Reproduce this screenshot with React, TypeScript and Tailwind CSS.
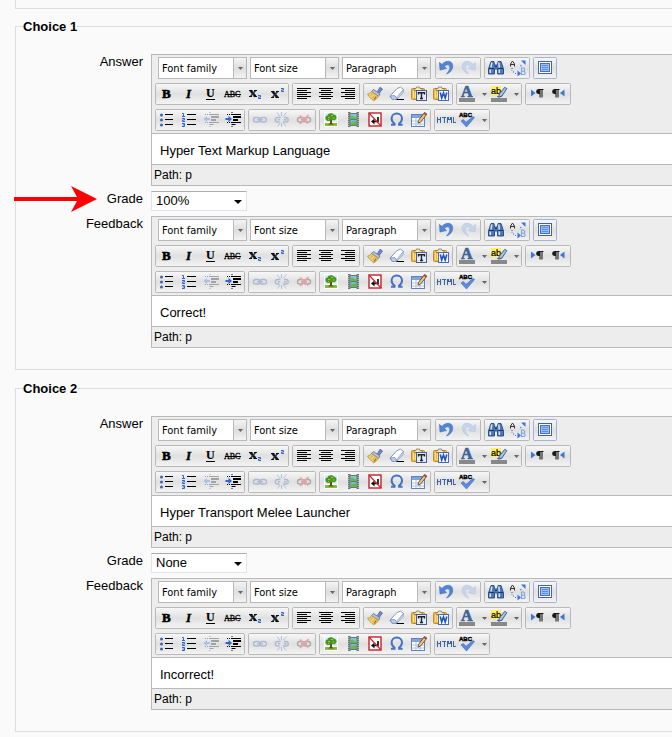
import { useId } from "react";
import type { ReactNode } from "react";

const BLUE = "#3366cc";

function Glyph({ children, crisp }: { children: ReactNode; crisp?: boolean }) {
  return (
    <svg width="22" height="20" viewBox="0 0 22 20" aria-hidden="true" className="block shrink-0 overflow-visible" shapeRendering={crisp ? "crispEdges" : "auto"}>
      {children}
    </svg>
  );
}

const serifBold = "font-['Liberation_Serif',serif] font-bold";

/* Text formatting */
const Bold = () => (
  <Glyph><text x="6" y="14" className={`${serifBold} text-[13px]`} stroke="#000" strokeWidth="0.6">B</text></Glyph>
);
const Italic = () => (
  <Glyph><text x="8" y="14" className={`${serifBold} text-[13px] italic`} stroke="#000" strokeWidth="0.4">I</text></Glyph>
);
const Underline = () => (
  <Glyph>
    <text x="6" y="13" className={`${serifBold} text-[12px]`} stroke="#000" strokeWidth="0.2">U</text>
    <rect x="6" y="15" width="9" height="1" />
  </Glyph>
);
const Strike = () => (
  <Glyph>
    <text x="2" y="13" className="font-['Liberation_Serif',serif] text-[8px]" stroke="#000" strokeWidth="0.3">ABC</text>
    <rect x="3" y="10" width="16" height="1" />
  </Glyph>
);
const Two = ({ x, y }: { x: number; y: number }) => (
  <path d={`M${x} ${y + 0.5}h2.500v1.500h-2v1.500h2.500`} fill="none" stroke={BLUE} />
);
const LetterX = ({ x, y }: { x: number; y: number }) => (
  <g transform={`translate(${x} ${y})`}>
    <path d="M1.500 .5l5 6" stroke="#111" strokeWidth="2.400" />
    <path d="M6.500 .5l-5 6" stroke="#26334d" strokeWidth="1.500" />
    <path d="M0 .5h3.500M5 .5h3M0 6.500h3M4.500 6.500H8" stroke="#111" />
  </g>
);
const Sub = () => <Glyph><LetterX x={5} y={6} /><Two x={14} y={11} /></Glyph>;
const Sup = () => <Glyph><LetterX x={5} y={7} /><Two x={15} y={4} /></Glyph>;

/* Alignment */
const AlignLeft = () => (
  <Glyph crisp><path d="M4 4.500h14M4 6.500h10M4 8.500h14M4 10.500h10M4 12.500h14M4 14.500h10" stroke="#000" /></Glyph>
);
const AlignCenter = () => (
  <Glyph crisp><path d="M4 4.500h14M6 6.500h10M4 8.500h14M6 10.500h10M4 12.500h14M6 14.500h10" stroke="#000" /></Glyph>
);
const AlignRight = () => (
  <Glyph crisp><path d="M4 4.500h14M8 6.500h10M4 8.500h14M8 10.500h10M4 12.500h14M8 14.500h10" stroke="#000" /></Glyph>
);

/* Clean-up and clipboard */
const Brush = () => (
  <Glyph>
    <path d="M13.500 7.500l2.500-4.200 2.500 1.700L15.500 9z" fill="#6f8bca" stroke="#4c62a0" strokeWidth=".8" />
    <path d="M9.500 5.500l6.500 4.500-1.400 2.200-7.200-4.400z" fill="#b5c1dd" stroke="#5a6b98" strokeWidth=".8" />
    <path d="M7.500 7.800l6.800 4.400c-1 2.200-2.600 3.800-4.800 4.500C7.500 15.300 5.500 13 3.500 10.200c1.600-.3 3-1.200 4-2.400z" fill="#efd06a" stroke="#b8923a" strokeWidth=".8" />
    <path d="M12.300 12.500l-2.300 3" stroke="#8d671a" strokeWidth="1.200" />
    <path d="M8.500 10l-2 1.500M10.500 11.500l-2 2.500" stroke="#c59a3c" strokeWidth=".7" />
  </Glyph>
);
const Eraser = () => (
  <Glyph>
    <path d="M11 4.500l3.500-1.300 3 2.300-6.500 9.300H6L4 12.200z" fill="#fff" stroke="#8a9abd" />
    <path d="M4.200 12l4.500-.4 2.200 2.900-.8.8H6z" fill="#c2d1ef" stroke="#6d83b7" strokeWidth=".8" />
    <path d="M17.300 5.700v2.800l-6.300 6.500v-2.300z" fill="#c5d2ec" stroke="#7e92c0" strokeWidth=".6" />
    <path d="M10.500 15.500h7.500" stroke="#000" />
  </Glyph>
);
const Clipboard = ({ children }: { children: ReactNode }) => (
  <Glyph>
    <rect x="3.500" y="4.500" width="13" height="11" rx="1" fill="#f0b93c" stroke="#c08c2e" />
    <path d="M5.500 6v8M7.500 8v6" stroke="#fbe298" />
    <path d="M6 6.500V4.500h2l.5-1.500h3l.5 1.500h2v2z" fill="#efe6c8" stroke="#8d7440" strokeWidth=".8" />
    {children}
  </Glyph>
);
const PasteText = () => (
  <Clipboard>
    <rect x="8.500" y="6.500" width="10" height="10" fill="#e6ebf2" stroke="#4d5f85" />
    <path d="M10.500 10.500V8.700h6v1.800M13.500 8.700v6M12 14.500h3" fill="none" stroke="#16213a" strokeWidth="1.400" />
  </Clipboard>
);
const PasteWord = () => (
  <Clipboard>
    <rect x="8.500" y="6.500" width="10" height="10" fill="#f3f7ff" stroke="#4a6cae" />
    <path d="M10.300 8.500l1.400 5.500 1.800-5 1.700 5L16.800 8.500" fill="none" stroke="#2456b5" strokeWidth="1.600" />
  </Clipboard>
);

/* Colours */
const ForeColor = () => (
  <Glyph>
    <text x="4" y="13" fill="#3f6699" stroke="#3f6699" strokeWidth=".7" className={`${serifBold} text-[16px]`}>A</text>
    <rect x="2" y="14" width="16" height="4" fill="#888" />
  </Glyph>
);
const BackColor = () => (
  <Glyph>
    <rect x="2" y="2" width="10" height="9" fill="#fff05e" />
    <text x="2" y="10" className="font-['Liberation_Sans',sans-serif] text-[9px]" stroke="#000" strokeWidth=".2">ab</text>
    <path d="M15.800 3.300l2 1.400-5 7.500-3.300.8.900-3z" fill="#a9c3e8" stroke="#41608f" strokeWidth="1" />
    <path d="M8 12.500c2 .8 4 .4 5.500-.8" fill="none" stroke="#4a6798" />
    <rect x="2" y="14" width="16" height="4" fill="#888" />
  </Glyph>
);

/* Text direction */
const Pilcrow = ({ x }: { x: number }) => (
  <g transform={`translate(${x} 5)`}>
    <path d="M3 .5h4.500M4 0v8.500M6 0v8.500" stroke="#1a1a1a" strokeWidth="1.100" />
    <path d="M4 0H2.700a2.500 2.500 0 000 5H4z" fill="#1a1a1a" />
  </g>
);
const Ltr = () => <Glyph><path d="M5 5.500v7l4.500-3.500z" fill="#3f75d6" /><Pilcrow x={10} /></Glyph>;
const Rtl = () => <Glyph><Pilcrow x={4} /><path d="M16.500 5.500v7L12 9z" fill="#3f75d6" /></Glyph>;

/* Lists and indents */
const Bullets = () => (
  <Glyph>
    <circle cx="5.500" cy="5" r="1.500" fill="#3b62b5" />
    <circle cx="5.500" cy="10" r="1.500" fill="#3b62b5" />
    <circle cx="5.500" cy="15" r="1.500" fill="#3b62b5" />
    <path d="M9 4.500h8M9 9.500h8M9 14.500h8" stroke="#000" />
  </Glyph>
);
const Numbers = () => (
  <Glyph>
    <path d="M4 3.500h1.500v3M4 6.500h3M4 8.500h2.500v1.500h-2v1.500H7M4 13.500h2.500v3H4M4.500 15h2" fill="none" stroke={BLUE} />
    <path d="M9 4.500h9M9 9.500h9M9 14.500h9" stroke="#000" />
  </Glyph>
);
const IndentLines = ({ color }: { color: string }) => (
  <g stroke={color}>
    <path d="M5 4.500h4" strokeDasharray="1 1" />
    <path d="M9 4.500h10M9 12.500h10" />
    <path d="M5 12.500h4" strokeDasharray="1 1" />
    <path d="M11 7h8M11 10h5" strokeWidth="2" />
    <path d="M9.500 2.500h1M9.500 14.500h4M9.500 16.500h1" />
  </g>
);
const Outdent = () => (
  <Glyph><IndentLines color="#a2a2a2" /><path d="M3.500 9L7 6v2h3v2H7v2z" fill="#a8c0ea" /></Glyph>
);
const Indent = () => (
  <Glyph><IndentLines color="#000" /><path d="M10 9L6.500 5.800V8h-3v2h3v2.200z" fill={BLUE} /></Glyph>
);

/* Links */
const Chain = ({ color }: { color: string }) => (
  <g fill="none" stroke={color} strokeWidth="1.400">
    <rect x="4.500" y="7.500" width="6.500" height="4.500" rx="2.200" />
    <rect x="11" y="7.500" width="6.500" height="4.500" rx="2.200" />
    <path d="M8 9.800h6" />
  </g>
);
const Link = () => <Glyph><Chain color="#aebad3" /></Glyph>;
const Unlink = () => (
  <Glyph>
    <g fill="none" stroke="#aebad3" strokeWidth="1.400">
      <path d="M9.500 7.500H6.500a2.200 2.200 0 000 4.500h2M13 7.500h2a2.200 2.200 0 010 4.500h-3M9 9.800H7M13 9.800h2.500" />
    </g>
    <path d="M10.500 2v4M6 2.500l3 4M15.500 2.500l-3.500 4M10.500 13v4M6.500 16.500L9 13M15 16.500L12.500 13" stroke="#b0bfdd" />
  </Glyph>
);
const NoLink = () => (
  <Glyph><Chain color="#a9a9a9" /><path d="M7 5.500l8 8M15.500 5l-8.500 9" stroke="#f0a0a0" strokeWidth="1.600" /></Glyph>
);

/* Inserts */
const Picture = () => (
  <Glyph>
    <rect x="4" y="2" width="14" height="15" fill="#fff" />
    <rect x="5" y="3" width="12" height="9" fill="#d9ecfa" />
    <rect x="5" y="13" width="12" height="3" fill="#84bf3c" />
    <path d="M10 9h2v4l2 1.500H8L10 13z" fill="#71451f" />
    <path d="M5.500 9C5 7 6 5.500 7.500 5.500 8 3 12.500 2.500 13.500 4.500c2 0 3.500 2 3 3.500-.5 2.500-3 2.700-5 2C9.500 11.500 6.500 11.500 5.500 9z" fill="#4a9420" />
    <path d="M8 7.500h2M11 5.500h2M12.500 8h2M8 9.500h1" stroke="#8fd04c" />
  </Glyph>
);
const Film = () => (
  <Glyph>
    <path d="M6 2h2.500v1h6V2H17v15h-2.500v-1h-6v1H6z" fill="#6d7673" />
    <path d="M8.500 4h6v5h-6z" fill="#7fc9d6" />
    <path d="M8.500 10h6v5h-6z" fill="#70b9e0" />
    <path d="M8.500 9V6.500L11 5.500l1.500 2 2-1V9zM8.500 15v-2l2.500-1 3.500-1v4z" fill="#63b94c" />
    <path d="M6.800 3v14M16.200 3v14" stroke="#c9d2cf" strokeDasharray="1 1" />
  </Glyph>
);
const Nbsp = () => (
  <Glyph>
    <rect x="5" y="3" width="12" height="13" fill="#fff" stroke="#c91f2c" strokeWidth="1.400" />
    <path d="M14 7v4.500H9" fill="none" stroke="#111" strokeWidth="1.700" />
    <path d="M7 11.500l3.500-3v6z" fill="#111" />
    <path d="M5 3l12 13" stroke="#d32632" strokeWidth="1.200" />
  </Glyph>
);
const Omega = () => (
  <Glyph>
    <path d="M5 14.800h3.500v-1.300C6.700 12.300 5.600 10.700 5.600 8.500c0-3 2.200-5 5.200-5s5.200 2 5.200 5c0 2.200-1.100 3.800-2.900 5v1.300h3.500" fill="none" stroke="#4271c6" strokeWidth="2" />
  </Glyph>
);
const TableIcon = () => (
  <Glyph>
    <rect x="3.500" y="4.500" width="13" height="12" fill="#fff" stroke="#5f84bd" />
    <rect x="4" y="5" width="12" height="3" fill="#7fa5dc" />
    <path d="M4 11h12M4 14h12M8 8v8M12 8v8" stroke="#a8c0e2" />
    <path d="M16.500 2.500l2.300 1.800-6.300 7.800-2.500 1 .5-2.700z" fill="#efc77c" stroke="#5f4426" strokeWidth=".9" />
    <path d="M16.700 2.200l2.300 1.800-1.200 1.500-2.300-1.800z" fill="#b5483c" />
  </Glyph>
);
const Html = () => (
  <Glyph crisp>
    <path d="M2.500 7v6M5.500 7v6M2 9.500h4M7 7.500h4M9 7.500v5.500M12.500 13V7.500h1v2h2v-2h1V13M18.500 7v5.500H21" fill="none" stroke="#3c62a8" />
  </Glyph>
);
const Spell = () => (
  <Glyph>
    <text x="2" y="7" className="font-['Liberation_Sans',sans-serif] text-[6px] font-bold" stroke="#000" strokeWidth=".4">ABC</text>
    <path d="M4 11l2.300-1.500 2.700 2.800L16 6.500l1.500 1L9.500 17z" fill="#5b8ae0" stroke="#3c67bd" strokeWidth=".6" />
  </Glyph>
);

/* History, search, screen */
const Undo = () => (
  <Glyph>
    <path d="M3.500 4.500l.5 7.500 6.500-1.500-2-1.800c1.500-2.200 4.500-2.700 5.200-.2.600 2.600-.7 4.800-3.200 7.500 4-1.500 6.500-4.800 6.200-8.500C16.200 2.500 10 1.800 6 6.500z" fill="#5285d8" stroke="#3968bb" strokeWidth=".6" />
  </Glyph>
);
const Redo = () => (
  <Glyph>
    <path d="M17.500 4.500L17 12l-6.500-1.500 2-1.800C11 6.500 8 6 7.300 8.500c-.6 2.600.7 4.800 3.200 7.500-4-1.500-6.500-4.800-6.200-8.500C4.800 2.500 11 1.800 15 6.500z" fill="#c5d5ed" stroke="#b0c3e1" strokeWidth=".6" />
  </Glyph>
);
const Find = () => (
  <Glyph>
    <path d="M6 3.500h3L9.500 7h3L13 3.500h3L18.500 11v5h-6v-5h-3v5h-6v-5z" fill="#5078b8" stroke="#23477e" strokeWidth=".9" />
    <path d="M6.800 4.500L6 9.500M5.300 11.500v3.500M13.800 4.500l.5 5M14.300 11.500v3.500" stroke="#d6e5fb" strokeWidth="1.500" />
    <path d="M4 10.500h5M13 10.500h5M10 8.500h2" stroke="#1b3765" />
  </Glyph>
);
const Replace = () => (
  <Glyph>
    <path d="M3.500 8.500V6L5.500 3l2 3v2.500M4 6.500h3" fill="none" stroke="#333" />
    <path d="M14.500 10v6.500h3q1.500-1.700-.5-3.200 1.500-1.800-.5-3.300zM14.500 13.300h2.500" fill="none" stroke="#7ba2ea" strokeWidth="1.100" />
    <path d="M5 10v2.500M6 14h1M8 15.500h2M13.500 8l1-1" stroke={BLUE} strokeWidth="1.200" strokeDasharray="1 1" />
    <path d="M10.500 12.500l3.500 3-3.500 3zM14 2.500h4.500V7z" fill="#3b72e0" />
  </Glyph>
);
const Screen = () => (
  <Glyph crisp>
    <rect x="4.500" y="3.500" width="13" height="12" fill="#fff" stroke="#4b6298" />
    <rect x="6.500" y="5.500" width="9" height="8" fill="#9dbff5" stroke="#3e6fcb" />
    <path d="M8 7.500h6M8 9.500h6M8 11.500h6" stroke="#5d8be0" />
  </Glyph>
);

type Tool = { name: string; icon: ReactNode; menu?: boolean };

const history: Tool[] = [{ name: "Undo", icon: <Undo /> }, { name: "Redo", icon: <Redo /> }];
const search: Tool[] = [{ name: "Find", icon: <Find /> }, { name: "Find and replace", icon: <Replace /> }];
const screen: Tool[] = [{ name: "Full screen", icon: <Screen /> }];
const formatting: Tool[][] = [
  [
    { name: "Bold", icon: <Bold /> },
    { name: "Italic", icon: <Italic /> },
    { name: "Underline", icon: <Underline /> },
    { name: "Strikethrough", icon: <Strike /> },
    { name: "Subscript", icon: <Sub /> },
    { name: "Superscript", icon: <Sup /> },
  ],
  [
    { name: "Align left", icon: <AlignLeft /> },
    { name: "Align center", icon: <AlignCenter /> },
    { name: "Align right", icon: <AlignRight /> },
  ],
  [
    { name: "Clean up code", icon: <Brush /> },
    { name: "Remove formatting", icon: <Eraser /> },
    { name: "Paste as plain text", icon: <PasteText /> },
    { name: "Paste from Word", icon: <PasteWord /> },
  ],
  [
    { name: "Text color", icon: <ForeColor />, menu: true },
    { name: "Background color", icon: <BackColor />, menu: true },
  ],
  [{ name: "Left to right", icon: <Ltr /> }, { name: "Right to left", icon: <Rtl /> }],
];
const inserting: Tool[][] = [
  [
    { name: "Bulleted list", icon: <Bullets /> },
    { name: "Numbered list", icon: <Numbers /> },
    { name: "Outdent", icon: <Outdent /> },
    { name: "Indent", icon: <Indent /> },
  ],
  [
    { name: "Insert link", icon: <Link /> },
    { name: "Unlink", icon: <Unlink /> },
    { name: "Prevent automatic linking", icon: <NoLink /> },
  ],
  [
    { name: "Insert image", icon: <Picture /> },
    { name: "Insert media", icon: <Film /> },
    { name: "Insert nonbreaking space", icon: <Nbsp /> },
    { name: "Insert custom character", icon: <Omega /> },
    { name: "Insert table", icon: <TableIcon /> },
  ],
  [{ name: "Edit HTML source", icon: <Html /> }, { name: "Spellchecker", icon: <Spell />, menu: true }],
];

function Caret() {
  return (
    <svg width="5" height="3" viewBox="0 0 5 3" aria-hidden="true">
      <path d="M0 0h5L2.500 3z" fill="#666" />
    </svg>
  );
}

function ToolGroup({ tools, active }: { tools: Tool[]; active?: boolean }) {
  return (
    <div className={`flex shrink-0 rounded-xs border ${active ? "border-[#a3b3d6]" : "border-[#b9b9b9]"}`}>
      {tools.map((tool) => (
        <button
          key={tool.name}
          type="button"
          aria-label={tool.name}
          className="flex h-5 items-center bg-linear-to-b from-[#f7f7f7] via-[#e0e0e0] to-[#f3f3f3]"
        >
          {tool.icon}
          {tool.menu && <span className="flex w-2.5 justify-center"><Caret /></span>}
        </button>
      ))}
    </div>
  );
}

function FormatSelect({ label }: { label: string }) {
  return (
    <div className="relative h-[22px] w-[89px] shrink-0 border border-[#b9b9b9] bg-white">
      <select
        aria-label={label}
        className="block h-5 w-full appearance-none bg-transparent pl-[3px] pr-3 pt-0.5 font-['DejaVu_Sans_Condensed','DejaVu_Sans',sans-serif] text-[11px] leading-4 text-black"
      >
        <option>{label}</option>
      </select>
      <span className="pointer-events-none absolute inset-y-0 right-0 flex w-[13px] items-center justify-center border-l border-[#b9b9b9] bg-linear-to-b from-[#f5f5f5] via-[#dddddd] to-[#f3f3f3]">
        <Caret />
      </span>
    </div>
  );
}

function Editor({ id, value }: { id: string; value: string }) {
  return (
    <div className="min-w-0 flex-1 overflow-hidden border-y border-l border-[#b9b9b9] bg-[#ededed]">
      <div className="flex flex-col gap-1 border-b border-[#b9b9b9] pt-0.5 pb-0.5 pl-[3px]">
        <div className="flex gap-[3px] pl-[3px]">
          <FormatSelect label="Font family" />
          <FormatSelect label="Font size" />
          <FormatSelect label="Paragraph" />
          <div className="flex gap-[3px] pl-px">
            <ToolGroup tools={history} />
            <ToolGroup tools={search} />
            <ToolGroup tools={screen} active />
          </div>
        </div>
        <div className="flex gap-[3px]">
          {formatting.map((tools) => <ToolGroup key={tools[0].name} tools={tools} />)}
        </div>
        <div className="flex gap-[3px]">
          {inserting.map((tools) => <ToolGroup key={tools[0].name} tools={tools} />)}
        </div>
      </div>
      <textarea
        id={id}
        defaultValue={value}
        rows={1}
        className="block h-[30px] w-full resize-none overflow-hidden bg-white px-2 py-[9px] text-[13px] leading-4 outline-none"
      />
      <div className="h-[21px] border-t border-[#b9b9b9] px-0.5 py-0.5 text-[12px] leading-4">Path: p</div>
    </div>
  );
}

function Field({ id, label, children }: { id: string; label: string; children: ReactNode }) {
  return (
    <div className="relative flex items-start gap-2">
      <label htmlFor={id} className="w-[120px] shrink-0 text-right">{label}</label>
      {children}
    </div>
  );
}

function GradeSelect({ id, value }: { id: string; value: string }) {
  return (
    <div className="relative h-5 w-24 border border-[#e2e3ea] border-t-[#abadb3] bg-white">
      <select id={id} defaultValue={value} className="block h-[18px] w-full appearance-none bg-transparent pr-4 pl-1 text-[13px] leading-4 text-black">
        <option>None</option>
        <option>100%</option>
      </select>
      <svg width="8" height="4" viewBox="0 0 8 4" aria-hidden="true" className="pointer-events-none absolute top-2 right-1">
        <path d="M0 0h8L4 4z" />
      </svg>
    </div>
  );
}

function Pointer() {
  return (
    <svg width="84" height="28" viewBox="0 0 84 28" aria-hidden="true" className="absolute -top-1.5 -left-[9px]">
      <path d="M0 12h63L57 1l26 13-26 13 6-11H0z" fill="#f00" />
    </svg>
  );
}

type ChoiceProps = { title: string; answer: string; grade: string; feedback: string; marked?: boolean };

function Choice({ title, answer, grade, feedback, marked }: ChoiceProps) {
  const id = useId();
  return (
    <fieldset className="min-w-0 border border-r-0 border-[#dddddd] pb-[21px] pl-[7px]">
      <legend className="h-[17px] font-bold leading-[17px]">{title}</legend>
      <div className="flex flex-col gap-[5px] pt-[19px]">
        <Field id={`${id}-answer`} label="Answer">
          <Editor id={`${id}-answer`} value={answer} />
        </Field>
        <Field id={`${id}-grade`} label="Grade">
          <GradeSelect id={`${id}-grade`} value={grade} />
          {marked && <Pointer />}
        </Field>
        <Field id={`${id}-feedback`} label="Feedback">
          <Editor id={`${id}-feedback`} value={feedback} />
        </Field>
      </div>
    </fieldset>
  );
}

export default function App() {
  return (
    <main className="min-h-screen overflow-hidden bg-[#fafafa] pl-[15px] font-['Liberation_Sans',Arial,sans-serif] text-[13px] leading-4 text-black">
      <div className="mb-[9px] h-[9px] border-b border-l border-[#dddddd]" />
      <form className="flex flex-col gap-[10px]">
        <Choice title="Choice 1" answer="Hyper Text Markup Language" grade="100%" feedback="Correct!" marked />
        <Choice title="Choice 2" answer="Hyper Transport Melee Launcher" grade="None" feedback="Incorrect!" />
      </form>
    </main>
  );
}
